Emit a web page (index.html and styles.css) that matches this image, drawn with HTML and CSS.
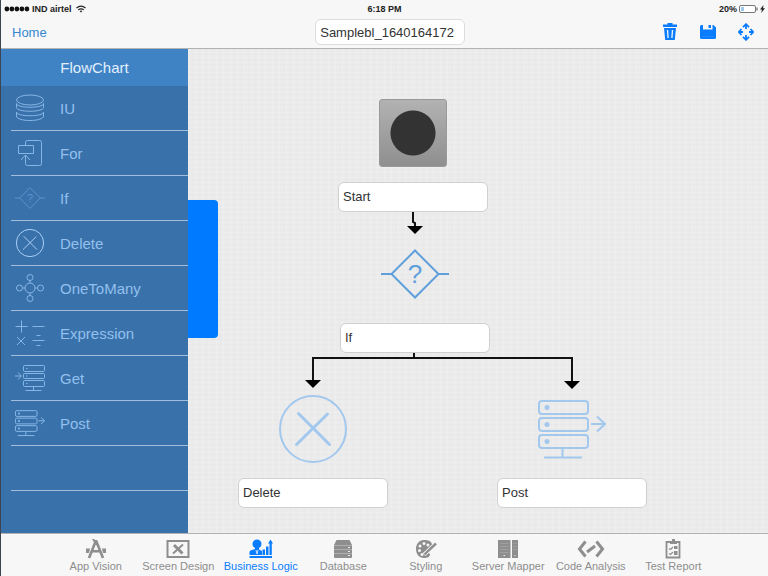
FILE: index.html
```html
<!DOCTYPE html>
<html lang="en">
<head>
    <meta charset="UTF-8">
    <meta name="viewport" content="width=device-width, initial-scale=1.0">
    <title>FlowChart</title>
    <link rel="stylesheet" href="styles.css">
</head>
<body>
    <!-- icons used in both the palette and the canvas -->
    <svg class="sprites" aria-hidden="true">
        <symbol id="icon-if" viewBox="0 0 68 68">
            <path d="M34 10.500L57.500 34 34 57.500 10.500 34zM0 34h10.500M57.500 34H68"/>
            <text x="34" y="43" text-anchor="middle">?</text>
        </symbol>
        <symbol id="icon-delete" viewBox="0 0 68 68">
            <circle cx="34" cy="34" r="33"/>
            <path class="cross" d="M19.500 18.500l31 31M48.500 19L17.500 49.500"/>
        </symbol>
        <symbol id="icon-post" viewBox="0 0 68 68">
            <rect x="1" y="6" width="49" height="13" rx="3"/>
            <rect x="1" y="23" width="49" height="13" rx="3"/>
            <rect x="1" y="40" width="49" height="13" rx="3"/>
            <path d="M24.500 54v8M6 62.500h38M53 29h14M59 21.500l8 7.500-8 7.500"/>
            <path class="dot" d="M6.500 12.500a2.500 2.500 0 1 1 5 0a2.500 2.500 0 1 1-5 0M6.500 29.500a2.500 2.500 0 1 1 5 0a2.500 2.500 0 1 1-5 0M6.500 46.500a2.500 2.500 0 1 1 5 0a2.500 2.500 0 1 1-5 0"/>
        </symbol>
    </svg>

    <header>
        <div class="status">
            <div class="carrier">
                <svg width="26" height="6" viewBox="0 0 27 6"><g fill="#111"><circle cx="3" cy="3" r="2.500"/><circle cx="8.200" cy="3" r="2.500"/><circle cx="13.400" cy="3" r="2.500"/><circle cx="18.600" cy="3" r="2.500"/><circle cx="23.800" cy="3" r="2.500"/></g></svg>
                <span>IND airtel</span>
                <svg width="10" height="8" viewBox="0 0 10 8" fill="none" stroke="#222" stroke-width="1.200"><path d="M.5 3Q5-.8 9.500 3M2.200 4.900Q5 2.700 7.800 4.900"/><path d="M5 7.600L3.600 6.100Q5 5.100 6.400 6.100z" fill="#222" stroke="none"/></svg>
            </div>
            <span>6:18 PM</span>
            <div class="power">
                <span>20%</span>
                <svg width="19" height="8" viewBox="0 0 19 8"><rect x=".5" y=".5" width="16" height="7" rx="1.500" fill="#fff" stroke="#777"/><path d="M18 2.500v3" stroke="#555"/><path d="M2 2h3v4H2z" fill="#9cc9ea"/></svg>
                <svg width="5" height="8" viewBox="0 0 5 8"><path d="M3.500 0L0 4.500h2L1.200 8 5 3.300H3z" fill="#222"/></svg>
            </div>
        </div>
        <nav>
            <a href="#home">Home</a>
            <input class="field" type="text" value="Samplebl_1640164172" aria-label="Business logic name">
            <div class="actions">
                <button type="button" aria-label="Delete">
                    <svg width="16" height="18" viewBox="0 0 16 18"><path d="M5.500 0h5v1.500H15V4H1V1.500h4.500zM2 5h12l-1.200 12H3.200z" fill="currentColor"/><path d="M5.500 7l.6 8M10.500 7l-.6 8" stroke="#f7f7f7" stroke-width="1.300" fill="none"/></svg>
                </button>
                <button type="button" aria-label="Save">
                    <svg width="16" height="18" viewBox="0 0 16 18"><path d="M0 3.500Q0 2 1.500 2H3v4.500h9.500V2h1L16 4.500v10q0 1.500-1.500 1.500h-13Q0 16 0 14.500z" fill="currentColor"/><path d="M8.500 2H11v3H8.500z" fill="currentColor"/><path d="M3 13h10v1H3z" fill="#1f88ff"/></svg>
                </button>
                <button type="button" aria-label="Move">
                    <svg width="16" height="18" viewBox="0 0 16 18" fill="none" stroke="currentColor" stroke-width="1.800"><path d="M8 1.500V6M8 12v4.500M.8 9H5M11 9h4.200M5 4.200l3-3 3 3M5 13.800l3 3 3-3M3.500 6L.7 9l2.800 3M12.500 6l2.800 3-2.800 3"/></svg>
                </button>
            </div>
        </nav>
    </header>

    <main>
        <aside>
            <h1>FlowChart</h1>
            <ul>
                <li><button type="button">
                    <svg viewBox="0 0 30 30"><ellipse cx="15" cy="7" rx="13.500" ry="5"/><path d="M1.500 10.500v4c0 5 27 5 27 0v-4c0 5-27 5-27 0zM1.500 19v4c0 6 27 6 27 0v-4c0 5-27 5-27 0z"/></svg>
                    IU</button></li>
                <li><button type="button">
                    <svg viewBox="0 0 30 30"><path d="M10.500 7V4.500q0-2 2-2h12q2 0 2 2v21q0 2-2 2h-12q-2 0-2-2V17"/><path d="M3.500 7.500h15v8h-15zM6 22l4.500-5 4.500 5"/></svg>
                    For</button></li>
                <li class="dim"><button type="button"><svg><use href="#icon-if"/></svg>If</button></li>
                <li><button type="button"><svg class="bright" viewBox="-1 -1 32 32"><use href="#icon-delete" width="30" height="30"/></svg>Delete</button></li>
                <li><button type="button">
                    <svg viewBox="0 0 30 30"><circle cx="15" cy="15" r="5"/><circle cx="15" cy="4.500" r="3"/><circle cx="15" cy="25.500" r="3"/><circle cx="4.500" cy="15" r="3"/><circle cx="25.500" cy="15" r="3"/><path d="M15 7.500V10M15 20v2.500M7.500 15H10M20 15h2.500"/></svg>
                    OneToMany</button></li>
                <li><button type="button">
                    <svg viewBox="0 0 30 30"><path d="M6.500 2.500v12M.5 8.500h12M17.500 8.500h12M2 19l8 8M10 19l-8 8M17.500 22.500h12M21.500 17.500h4M21.500 27.500h4"/></svg>
                    Expression</button></li>
                <li><button type="button">
                    <svg viewBox="0 0 30 30"><rect x="8.500" y="2.500" width="21" height="6" rx="1"/><rect x="8.500" y="10.500" width="21" height="5" rx="1"/><rect x="8.500" y="17.500" width="21" height="6" rx="1"/><path d="M18.500 24v3.500M10.500 27.500h16M0 13h6M3 9.500L6.500 13 3 16.500M11 5.500h1.500M11 13h1.500M11 20.500h1.500"/></svg>
                    Get</button></li>
                <li><button type="button"><svg><use href="#icon-post"/></svg>Post</button></li>
                <li></li>
            </ul>
        </aside>

        <section class="canvas">
            <button class="handle" type="button" aria-label="Toggle palette"></button>

            <svg class="links" aria-hidden="true">
                <path d="M225 163v10l2 1v3M226 304v5M125 332v-23h259v23"/>
                <path class="head" d="M219 177h16l-8 8zM117 331h16l-8 8zM376 332h16l-8 8z"/>
            </svg>

            <div class="node start">
                <div class="tile"></div>
                <input class="field" type="text" value="Start" aria-label="Start node">
            </div>
            <div class="node if">
                <svg><use href="#icon-if"/></svg>
                <input class="field" type="text" value="If" aria-label="If node">
            </div>
            <div class="node delete">
                <svg><use href="#icon-delete"/></svg>
                <input class="field" type="text" value="Delete" aria-label="Delete node">
            </div>
            <div class="node post">
                <svg><use href="#icon-post"/></svg>
                <input class="field" type="text" value="Post" aria-label="Post node">
            </div>
        </section>
    </main>

    <footer>
        <div class="tabs">
            <a href="#vision">
                <svg viewBox="0 0 24 20"><path d="M12 1.500L5 19M12 1.500L19 19" fill="none" stroke="currentColor" stroke-width="2.600"/><path d="M2 9.500h4l-1 4.500H2zM22 9.500h-4l1 4.500h3zM7 11h10v2.500H7z" fill="currentColor"/><path d="M9 0l4 6" stroke="currentColor" stroke-width="2"/></svg>
                App Vision</a>
            <a href="#screen">
                <svg viewBox="0 0 24 20"><path d="M1.500 2h21v16h-21z" fill="none" stroke="currentColor" stroke-width="2"/><path d="M8 6l8.500 8.500" stroke="currentColor" stroke-width="3"/><path d="M17 5.500l-10 9" stroke="currentColor" stroke-width="2"/></svg>
                Screen Design</a>
            <a class="active" href="#logic">
                <svg viewBox="0 0 24 20"><path d="M3.500 5a4.500 4.500 0 0 1 9 0c0 2-1 3.200-2.500 4v1.500l3 1.500v4H.5v-3q0-1 1-1.500L6 10V9C4.500 8.200 3.500 7 3.500 5zM.5 17H23v2H.5zM13.500 10.500h2.500V16h-2.500zM17 7.500h2.500V16H17zM20.500 4.500H19L21.500.5l2.500 4h-1.200V16h-2.300z" fill="currentColor"/><path d="M7 11l1 4 1-4" fill="none" stroke="#f7f7f7" stroke-width=".8"/></svg>
                Business Logic</a>
            <a href="#database">
                <svg viewBox="0 0 24 20"><path d="M5.500 1h13l2.500 5v12q0 1-1 1H4q-1 0-1-1V6z" fill="currentColor"/><path d="M3 6.500h18M3 10.500h18M3 14.500h18" stroke="#b8b8b8" stroke-width=".8"/><path d="M17 8.500h2M17 12.500h2M17 16.500h2" stroke="#eee"/></svg>
                Database</a>
            <a href="#styling">
                <svg viewBox="0 0 24 20"><path d="M10 1C5 1 2 5 2 10s3 9 8 9c3 0 6-1 6-3.500 0-2-3-1.500-3-3.500s5-2 5-6-4-5-8-5z" fill="currentColor"/><g fill="#f7f7f7"><circle cx="10" cy="4.500" r="1.500"/><circle cx="6" cy="7" r="1.500"/><circle cx="5.500" cy="11.500" r="1.500"/><circle cx="8" cy="15.500" r="1.500"/><circle cx="14" cy="6" r="1.500"/></g><path d="M22 4.500L13 13l-3 2.500" fill="none" stroke="#f7f7f7" stroke-width="4"/><path d="M22 4.500l-7.500 7-4 4" fill="none" stroke="currentColor" stroke-width="2.400"/></svg>
                Styling</a>
            <a href="#server">
                <svg viewBox="0 0 24 20"><path d="M2 1h12.500v18H2zM16 1h6v18h-6z" fill="currentColor"/><path d="M4 4.500h8.500M4 7.500h8.500M4 10.500h8.500M4 13.500h8.500M17 4.500h4M17 7.500h4M17 10.500h4" stroke="#a4a4a4" stroke-width=".8"/><path d="M7.500 16.500h1.500M18.500 16.500h1" stroke="#eee"/></svg>
                Server Mapper</a>
            <a class="wide" href="#code">
                <svg viewBox="0 0 28 20"><path d="M8.500 2.500L2.500 10l6 7.500M19.500 2.500l6 7.500-6 7.500M10 13l8-6" fill="none" stroke="currentColor" stroke-width="3"/></svg>
                Code Analysis</a>
            <a href="#report">
                <svg viewBox="0 0 24 20"><path d="M5.500 3h13v15.500h-13z" fill="none" stroke="currentColor" stroke-width="1.800"/><path d="M9 2h2V0h3v2h2v3H9zM13 7h3.500v3H13zM13 12h3.500v4H13z" fill="currentColor"/><path d="M8 9.500l1.500 1L12 8M8 14.500l1.500 1L12 13" fill="none" stroke="currentColor" stroke-width="1.200"/></svg>
                Test Report</a>
        </div>
    </footer>
</body>
</html>
```

FILE: styles.css
```css
* {
    box-sizing: border-box;
}
body {
    font-family: "Liberation Sans", Arial, sans-serif;
    margin: 0;
    min-height: 100vh;
    display: flex;
    flex-direction: column;
    border-left: 1px solid #3c4650;
    background: #f7f7f7;
}
button {
    font: inherit;
    color: inherit;
    border: 0;
    padding: 0;
    background: none;
    cursor: pointer;
}
a {
    text-decoration: none;
}
.sprites {
    display: none;
}
.field {
    width: 150px;
    height: 30px;
    padding: 0 4px 2px;
    border: 1px solid #d0d0d0;
    border-radius: 6px;
    background: #fff;
    color: #333;
    font: inherit;
    font-size: 13px;
}

/* header */
header {
    border-bottom: 1px solid #b2b2b2;
}
.status {
    display: grid;
    grid-template-columns: 1fr auto 1fr;
    height: 18px;
    align-items: center;
    padding: 0 3px;
    font-size: 9px;
    font-weight: bold;
    color: #222;
}
.carrier,
.power {
    display: flex;
    align-items: center;
    gap: 2px;
}
.carrier svg:last-child {
    margin-left: 2px;
}
.power {
    justify-content: flex-end;
}
nav {
    display: grid;
    grid-template-columns: 1.05fr 150px 1fr;
    align-items: center;
    height: 30px;
    padding: 0 14px 2px 11px;
    font-size: 13px;
}
nav a {
    color: #3487d2;
}
nav .field {
    height: 26px;
    padding-bottom: 0;
    border-color: #dcdcdc;
}
.actions {
    display: flex;
    justify-content: flex-end;
    gap: 22px;
    color: #0a7dff;
}
.actions svg {
    display: block;
}

/* palette */
main {
    flex: 1;
    display: flex;
}
aside {
    width: 187px;
    background: #3971aa;
    color: #93c0ee;
    font-size: 15px;
}
h1 {
    margin: 0;
    background: #3f83c5;
    color: #e2effb;
    font-size: 15px;
    font-weight: normal;
    line-height: 37px;
    text-align: center;
}
ul {
    list-style: none;
    margin: 0;
    padding: 0 0 0 10px;
}
li {
    height: 45px;
    border-bottom: 1px solid #a3bedb;
}
li button {
    display: flex;
    align-items: center;
    gap: 15px;
    width: 100%;
    height: 100%;
    padding-left: 4px;
}
li svg {
    width: 30px;
    height: 30px;
    fill: none;
    stroke: #86b6e6;
    stroke-width: 1px;
    color: #86b6e6;
}
li .bright {
    stroke: #a9cff5;
}
.dim svg {
    stroke: #5c94cc;
    color: #5c94cc;
}
symbol path,
symbol circle,
symbol rect {
    vector-effect: non-scaling-stroke;
}
symbol text {
    font-size: 26px;
    fill: currentColor;
    stroke: none;
}
symbol .dot {
    fill: currentColor;
    stroke: none;
}
symbol .cross {
    stroke-width: var(--cross, 1px);
    stroke-linecap: round;
}

/* canvas */
.canvas {
    flex: 1;
    position: relative;
    min-height: 484px;
    background-color: #ebebeb;
    background-image:
        repeating-linear-gradient(90deg, rgba(255, 255, 255, .15) 0 1px, transparent 1px 4px, rgba(0, 0, 0, .008) 4px 5px, transparent 5px 7px),
        repeating-linear-gradient(0deg, rgba(255, 255, 255, .1) 0 1px, transparent 1px 3px, rgba(0, 0, 0, .006) 3px 4px, transparent 4px 5px);
}
.handle {
    position: absolute;
    left: 0;
    top: 151px;
    width: 30px;
    height: 138px;
    border-radius: 0 4px 4px 0;
    background: #007aff;
}
.links {
    position: absolute;
    left: 0;
    top: 0;
    width: 100%;
    height: 100%;
    fill: none;
    stroke: #111;
    stroke-width: 2px;
    pointer-events: none;
}
.links .head {
    fill: #000;
    stroke: none;
}
.node {
    position: absolute;
    display: flex;
    flex-direction: column;
    align-items: center;
    gap: 15px;
}
.node svg,
.tile {
    width: 68px;
    height: 68px;
}
.node svg {
    --cross: 3px;
    fill: none;
    stroke: #a3c8ee;
    stroke-width: 2px;
    color: #a3c8ee;
}
.node.if svg {
    stroke: #5f9fdb;
    color: #5f9fdb;
}
.tile {
    border: 1px solid #999;
    border-radius: 3px;
    background: radial-gradient(circle, #333 22px, transparent 23px), linear-gradient(#b2b2b2, #8f8f8f);
}
.start {
    left: 150px;
    top: 50px;
}
.if {
    left: 152px;
    top: 191px;
}
.delete {
    left: 50px;
    top: 346px;
}
.post {
    left: 309px;
    top: 346px;
}

/* tab bar */
footer {
    border-top: 1px solid #b2b2b2;
}
.tabs {
    display: flex;
    max-width: 660px;
    height: 42px;
    margin: 0 auto;
}
.tabs a {
    flex: 1 1 0;
    display: flex;
    flex-direction: column;
    align-items: center;
    justify-content: center;
    gap: 1px;
    color: #8e8e8e;
    font-size: 11px;
    white-space: nowrap;
}
.tabs .active {
    color: #0a7dff;
}
.tabs svg {
    width: 24px;
    height: 20px;
}
.tabs .wide svg {
    width: 28px;
}
```
